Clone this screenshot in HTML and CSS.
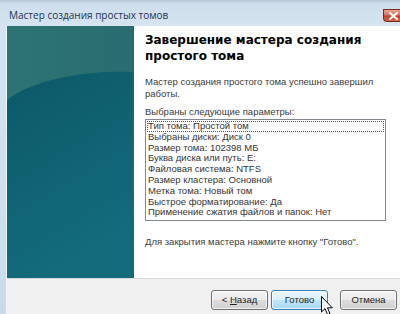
FILE: index.html
```html
<!DOCTYPE html>
<html>
<head>
<meta charset="utf-8">
<link rel="stylesheet" href="styles.css">
</head>
<body>
<div class="window">
  <div class="titlebar">
    <span class="title">Мастер создания простых томов</span>
    <span class="close">
      <svg width="9" height="8" viewBox="0 0 9 8"><path d="M1 1 L8 7 M8 1 L1 7" stroke="#fff" stroke-width="2" stroke-linecap="square"/></svg>
    </span>
  </div>
  <div class="client">
    <div class="main">
      <div class="side">
        <svg class="side-art" viewBox="0 0 127 252" preserveAspectRatio="none">
          <defs>
            <linearGradient id="dark" x1="0" y1="0" x2="0.3" y2="1">
              <stop offset="0" stop-color="#0b5563"/>
              <stop offset="1" stop-color="#136b7c"/>
            </linearGradient>
            <linearGradient id="light" x1="0" y1="0" x2="1" y2="0">
              <stop offset="0" stop-color="#2e7474"/>
              <stop offset="1" stop-color="#2a6c70"/>
            </linearGradient>
          </defs>
          <rect width="127" height="252" fill="url(#dark)"/>
          <path d="M0 0 H127 V46 C90 44 30 50 0 74 Z" fill="url(#light)"/>
          <rect x="125" y="0" width="2" height="252" fill="#1b6a76" opacity="0.6"/>
        </svg>
      </div>
      <div class="content">
        <h1 class="heading">Завершение мастера создания простого тома</h1>
        <p class="text intro">Мастер создания простого тома успешно завершил работы.</p>
        <p class="text label">Выбраны следующие параметры:</p>
        <div class="listbox">
          <div class="item focus">Тип тома: Простой том</div>
          <div class="item">Выбраны диски: Диск 0</div>
          <div class="item">Размер тома: 102398 МБ</div>
          <div class="item">Буква диска или путь: E:</div>
          <div class="item">Файловая система: NTFS</div>
          <div class="item">Размер кластера: Основной</div>
          <div class="item">Метка тома: Новый том</div>
          <div class="item">Быстрое форматирование: Да</div>
          <div class="item">Применение сжатия файлов и папок: Нет</div>
        </div>
        <p class="text close-hint">Для закрытия мастера нажмите кнопку "Готово".</p>
      </div>
    </div>
    <div class="footer">
      <span class="btn">&lt; <u>Н</u>азад</span>
      <span class="btn btn-hot">Готово</span>
      <span class="btn btn-cancel">Отмена</span>
    </div>
  </div>
  <svg class="cursor" width="13" height="20" viewBox="0 0 13 20">
    <path d="M0.5 0.5 V16 L4 12.6 L6.6 18.6 L9 17.6 L6.5 11.8 H11.3 Z" fill="#fff" stroke="#000" stroke-width="1" stroke-linejoin="miter"/>
  </svg>
</div>
</body>
</html>
```
FILE: styles.css
```css
html, body {
  margin: 0;
  padding: 0;
}
body {
  width: 400px;
  height: 314px;
  overflow: hidden;
  font-family: "Liberation Sans", Arial, sans-serif;
}
.window {
  position: relative;
  width: 400px;
  height: 314px;
  display: flex;
  flex-direction: column;
  background: linear-gradient(180deg, #b9c6d2 0px, #cfdeec 4px, #d6e4f1 26px, #c9dbeb 100%);
  overflow: hidden;
}
.titlebar {
  height: 26px;
  flex: none;
  display: flex;
  align-items: flex-start;
  justify-content: space-between;
  box-sizing: border-box;
}
.title {
  font-family: "Open Sans", "Liberation Sans", sans-serif;
  font-size: 10px;
  color: #1d3450;
  margin: 9px 0 0 9px;
  line-height: 13px;
}
.close {
  width: 17px;
  height: 13px;
  margin-top: 9px;
  box-sizing: border-box;
  border: 1px solid #7a2a1d;
  border-right: none;
  border-radius: 0 0 0 4px;
  background: linear-gradient(180deg, #e8a493 0%, #d57560 45%, #c24128 55%, #d2664a 100%);
  display: flex;
  align-items: center;
  padding-left: 5px;
}
.close svg {
  display: block;
}
.client {
  flex: 1;
  display: flex;
  flex-direction: column;
  margin-left: 7px;
  background: #f0f0f0;
  box-shadow: -1px 0 0 #f3f7fb;
}
.main {
  height: 252px;
  flex: none;
  display: flex;
  background: #fff;
  border-bottom: 1px solid #d5dadf;
}
.side {
  width: 127px;
  flex: none;
  position: relative;
}
.side-art {
  display: block;
  width: 127px;
  height: 252px;
}
.content {
  flex: 1;
  padding: 6px 14px 0 11px;
  color: #3a3a3a;
}
.heading {
  margin: 0;
  font-family: "DejaVu Sans", Verdana, sans-serif;
  font-weight: bold;
  font-size: 12px;
  line-height: 16px;
  color: #000;
}
.text {
  margin: 0;
  font-size: 9.5px;
  line-height: 12px;
}
.intro {
  margin-top: 12px;
}
.label {
  margin-top: 6px;
}
.listbox {
  margin-top: 1px;
  border: 1px solid #828790;
  padding: 1px 1px 2px 1px;
  font-size: 9.5px;
  line-height: 10.8px;
  color: #333;
}
.item {
  padding-left: 1px;
  border: 1px dotted transparent;
  border-width: 0;
}
.item.focus {
  outline: 1px dotted #555;
  outline-offset: -1px;
}
.close-hint {
  margin-top: 15px;
}
.footer {
  flex: 1;
  display: flex;
  justify-content: flex-end;
  align-items: flex-start;
  padding: 11px 3px 0 0;
  gap: 3px;
}
.btn {
  width: 57px;
  height: 20px;
  box-sizing: border-box;
  border: 1px solid #707070;
  border-radius: 3px;
  background: linear-gradient(180deg, #f3f3f3 0%, #ebebeb 48%, #dcdcdc 52%, #d0d0d0 100%);
  box-shadow: inset 0 0 0 1px rgba(255,255,255,0.7);
  font-size: 9.5px;
  line-height: 18px;
  text-align: center;
  color: #222;
}
.btn-hot {
  border-color: #3c7fb1;
  background: linear-gradient(180deg, #eaf6fd 0%, #d9f0fc 48%, #bee6fd 52%, #a7d9f5 100%);
}
.btn-cancel {
  margin-left: 9px;
}
.cursor {
  position: absolute;
  left: 321px;
  top: 296px;
}
```
